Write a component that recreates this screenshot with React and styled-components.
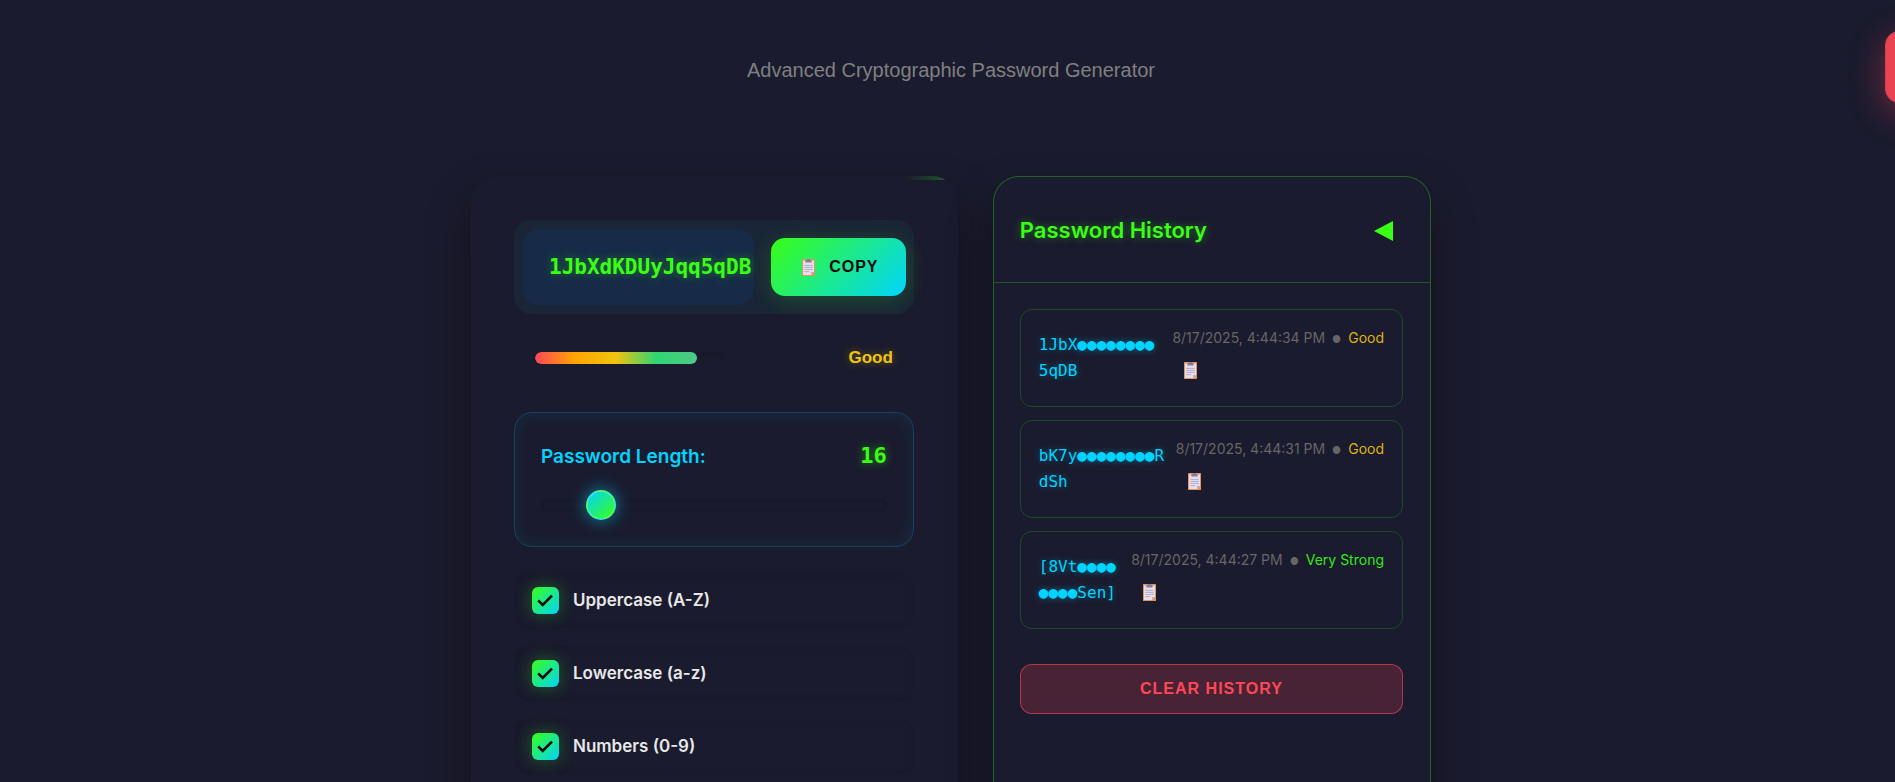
import React, { useState } from "react";
import styled, { createGlobalStyle } from "styled-components";

const GlobalStyle = createGlobalStyle`
  *, *::before, *::after { box-sizing: border-box; }
  html { scrollbar-width: none; background: #1a1b2e; }
  body {
    margin: 0;
    background: #1a1b2e;
    color: #e8e8e8;
    font-family: Inter, "Liberation Sans", sans-serif;
  }
  button, input { font: inherit; }
`;

const Page = styled.div`
  display: flex;
  flex-direction: column;
  align-items: center;
  padding: 55px 24px 48px 31px;
`;

const Subtitle = styled.p`
  margin: 0 0 91px;
  font: 20px/30px "Liberation Sans", sans-serif;
  color: #808080;
  text-align: center;
`;

const Columns = styled.main`
  display: grid;
  grid-template-columns: 10fr 9fr;
  gap: 35px;
  width: 100%;
  max-width: 960px;
`;

const Panel = styled.section`
  position: relative;
  background: #1a1b2e;
  border-radius: 26px;
  box-shadow: 0 22px 44px rgba(16, 6, 8, 0.4);
`;

const GeneratorPanel = styled(Panel)`
  overflow: hidden;
  padding: 44px 44px 44px 43px;

  &::before {
    content: "";
    position: absolute;
    inset: 0 0 auto;
    height: 4px;
    background: linear-gradient(90deg, transparent 89%, rgba(57, 255, 20, 0.24) 97%);
  }
`;

const HistoryPanel = styled(Panel)`
  border: 1px solid rgba(57, 255, 20, 0.3);
`;

const PasswordBox = styled.div`
  display: flex;
  align-items: center;
  justify-content: space-between;
  gap: 17px;
  padding: 9px 8px 9px 9px;
  border-radius: 18px;
  background: linear-gradient(135deg, #1a2538, #1a2536);
`;

const PasswordText = styled.output`
  flex: 1;
  min-width: 0;
  height: 76px;
  padding-left: 26px;
  border-radius: 16px;
  background: #172b48;
  font: bold 21px/76px "DejaVu Sans Mono", monospace;
  color: #39ff14;
  text-shadow: 0 0 9px rgba(57, 255, 20, 0.4);
  white-space: nowrap;
`;

const CopyButton = styled.button`
  display: flex;
  flex: none;
  align-items: center;
  justify-content: center;
  gap: 14px;
  width: 135px;
  height: 58px;
  padding: 0 0 0 4px;
  border: 0;
  border-radius: 14px;
  background: linear-gradient(135deg, #39ff14, #00d4ff);
  box-shadow: 0 4px 22px rgba(57, 255, 20, 0.2);
  font: bold 16px/20px "Liberation Sans", sans-serif;
  letter-spacing: 1px;
  color: #0a0a0f;
`;

const StrengthRow = styled.div`
  display: flex;
  align-items: center;
  justify-content: space-between;
  height: 36px;
  margin: 26px 0 36px;
  padding: 0 21px;
`;

const StrengthTrack = styled.div`
  width: 190px;
  height: 12px;
  border-radius: 6px;
  box-shadow: inset 1px 1px 4px rgba(0, 0, 0, 0.2);
  overflow: hidden;
`;

const StrengthFill = styled.div`
  width: 85%;
  height: 100%;
  border-radius: 6px;
  background: linear-gradient(90deg, #ff4757, #ffa502 25%, #f1c40f 50%, #2ed573 75%, #4fca86);
`;

const StrengthLabel = styled.span`
  font: bold 17px/20px "Liberation Sans", sans-serif;
  color: #f1c40f;
  text-shadow: 0 0 9px rgba(241, 196, 15, 0.4);
`;

const LengthBox = styled.div`
  display: flex;
  flex-direction: column;
  gap: 17px;
  margin-bottom: 26px;
  padding: 26px;
  border: 1px solid rgba(0, 212, 255, 0.22);
  border-radius: 18px;
  box-shadow: inset 0 0 17px rgba(0, 212, 255, 0.1);
`;

const LengthHeader = styled.div`
  display: flex;
  align-items: center;
  justify-content: space-between;
  height: 34px;
`;

const LengthLabel = styled.label`
  font-size: 19px;
  font-weight: 600;
  color: #00d4ff;
`;

const LengthValue = styled.span`
  font: bold 22px/34px "DejaVu Sans Mono", monospace;
  color: #39ff14;
  text-shadow: 0 0 9px rgba(57, 255, 20, 0.5);
`;

const Slider = styled.input`
  appearance: none;
  width: 100%;
  height: 30px;
  margin: 0;
  background: transparent;

  &::-webkit-slider-runnable-track {
    height: 12px;
    border-radius: 6px;
    box-shadow: inset 0 0 4px rgba(0, 0, 0, 0.25);
  }

  &::-webkit-slider-thumb {
    appearance: none;
    width: 30px;
    height: 30px;
    margin-top: -9px;
    border: 2px solid rgba(255, 255, 255, 0.2);
    border-radius: 50%;
    background: linear-gradient(135deg, #00d4ff, #39ff14);
    box-shadow: 0 0 17px rgba(0, 212, 255, 0.6);
  }
`;

const OptionList = styled.div`
  display: grid;
  gap: 18px;
`;

const Option = styled.label`
  display: flex;
  align-items: center;
  gap: 14px;
  height: 55px;
  padding: 0 18px;
  border-radius: 14px;
  box-shadow: inset 0 0 9px rgba(0, 0, 0, 0.12);
  font-size: 17px;
  font-weight: 600;
  line-height: 24px;
`;

const OptionName = styled.span`
  padding-bottom: 2px;
`;

const Check = styled.span`
  position: relative;
  display: grid;
  flex: none;
  width: 27px;
  height: 27px;
  border-radius: 6px;
  box-shadow: 0 0 17px rgba(57, 255, 20, 0.3);

  input, svg { grid-area: 1 / 1; }
  input {
    appearance: none;
    width: 27px;
    height: 27px;
    margin: 0;
    border-radius: 6px;
    background: #141424;
  }
  input:checked { background: linear-gradient(135deg, #39ff14, #00d4ff); }
  svg { display: none; pointer-events: none; z-index: 1; }
  input:checked + svg { display: block; }
`;

const HistoryHeader = styled.header`
  display: flex;
  align-items: center;
  justify-content: space-between;
  height: 106px;
  padding: 0 27px 0 26px;
  border-bottom: 1px solid rgba(57, 255, 20, 0.25);
`;

const HistoryTitle = styled.h2`
  margin: 0;
  font-size: 22px;
  font-weight: 600;
  line-height: 30px;
  color: #39ff14;
  text-shadow: 0 0 9px rgba(57, 255, 20, 0.4);
`;

const CollapseButton = styled.button`
  display: flex;
  padding: 12px 10px 10px;
  border: 0;
  background: none;
`;

const HistoryBody = styled.div`
  padding: 26px 27px 26px 26px;
`;

const HistoryList = styled.ul`
  display: grid;
  gap: 13px;
  margin: 0 0 35px;
  padding: 0;
  list-style: none;
`;

const HistoryItem = styled.li`
  display: flex;
  align-items: center;
  justify-content: space-between;
  height: 98px;
  padding: 0 18px;
  border: 1px solid rgba(57, 255, 20, 0.2);
  border-radius: 12px;
`;

const MaskedPassword = styled.code`
  font: 16px/26px "DejaVu Sans Mono", monospace;
  color: #00d4ff;
  text-shadow: 0 0 7px rgba(0, 212, 255, 0.4);
  white-space: pre;
`;

const ItemMeta = styled.div`
  display: flex;
  flex-direction: column;
  align-items: flex-start;
  gap: 8px;
  padding-bottom: 4px;
  font-size: 14px;
  line-height: 20px;
  color: #666666;
  white-space: nowrap;
`;

const Dot = styled.span`
  margin: 0 3px;
  font-size: 10px;
`;

const Rating = styled.span`
  color: ${(p) => (p.$strong ? "#39ff14" : "#f1c40f")};
  opacity: 0.9;
`;

const ItemCopy = styled.button`
  display: flex;
  align-items: center;
  height: 28px;
  padding: 0 12px;
  border: 0;
  background: none;
`;

const ClearButton = styled.button`
  width: 100%;
  height: 50px;
  border: 1px solid rgba(255, 71, 87, 0.6);
  border-radius: 12px;
  background: rgba(255, 71, 87, 0.2);
  font: bold 16px/20px "Liberation Sans", sans-serif;
  letter-spacing: 1px;
  color: #ff4757;
`;

const Toast = styled.div`
  position: fixed;
  top: 31px;
  left: calc(100% - 10px);
  width: 260px;
  height: 72px;
  border: 1px solid #d03f50;
  border-radius: 14px;
  background: #ea4453;
  box-shadow: 0 9px 35px rgba(255, 71, 87, 0.4);
`;

function ClipboardIcon() {
  return (
    <svg width="13" height="17" viewBox="0 0 13 17" aria-hidden="true">
      <rect width="13" height="17" rx="0.6" fill="#e3935c" />
      <path d="M1 1.6h11V13l-3 3H1z" fill="#e6ddf0" />
      <path d="M12 13 9 16v-3z" fill="#b5adc6" />
      <path d="M3.4 1h1.5V0h3.2v1h1.5v2.6H3.4z" fill="#857f91" />
      <path d="M2.3 6.4h8.4M2.3 8.4h8.4M2.3 10.4h8.4M2.3 12.6h4.7" stroke="#a9a3b9" strokeWidth="0.8" />
    </svg>
  );
}

function CheckIcon() {
  return (
    <svg width="27" height="27" viewBox="0 0 27 27" aria-hidden="true">
      <path d="M6.2 13.4 10.7 18 20 8.7" fill="none" stroke="#0a0a0f" strokeWidth="2.6" />
    </svg>
  );
}

const OPTIONS = ["Uppercase (A-Z)", "Lowercase (a-z)", "Numbers (0-9)"];

const HISTORY = [
  { masked: "1JbX●●●●●●●●\n5qDB", date: "8/17/2025, 4:44:34 PM", rating: "Good" },
  { masked: "bK7y●●●●●●●●R\ndSh", date: "8/17/2025, 4:44:31 PM", rating: "Good" },
  { masked: "[8Vt●●●●\n●●●●Sen]", date: "8/17/2025, 4:44:27 PM", rating: "Very Strong" },
];

export default function App() {
  const [length, setLength] = useState(16);

  return (
    <>
      <GlobalStyle />
      <Page>
        <Subtitle>Advanced Cryptographic Password Generator</Subtitle>
        <Columns>
          <GeneratorPanel>
            <PasswordBox>
              <PasswordText>1JbXdKDUyJqq5qDB</PasswordText>
              <CopyButton type="button">
                <ClipboardIcon />
                COPY
              </CopyButton>
            </PasswordBox>
            <StrengthRow>
              <StrengthTrack>
                <StrengthFill />
              </StrengthTrack>
              <StrengthLabel>Good</StrengthLabel>
            </StrengthRow>
            <LengthBox>
              <LengthHeader>
                <LengthLabel htmlFor="length">Password Length:</LengthLabel>
                <LengthValue>{length}</LengthValue>
              </LengthHeader>
              <Slider
                id="length"
                type="range"
                min="8"
                max="64"
                value={length}
                onChange={(e) => setLength(Number(e.target.value))}
              />
            </LengthBox>
            <OptionList>
              {OPTIONS.map((name) => (
                <Option key={name}>
                  <Check>
                    <input type="checkbox" defaultChecked />
                    <CheckIcon />
                  </Check>
                  <OptionName>{name}</OptionName>
                </Option>
              ))}
            </OptionList>
          </GeneratorPanel>
          <HistoryPanel>
            <HistoryHeader>
              <HistoryTitle>Password History</HistoryTitle>
              <CollapseButton type="button" aria-label="Collapse history">
                <svg width="19" height="20" viewBox="0 0 19 20" aria-hidden="true">
                  <path d="M0 10 19 0v20z" fill="#39ff14" />
                </svg>
              </CollapseButton>
            </HistoryHeader>
            <HistoryBody>
              <HistoryList>
                {HISTORY.map((item) => (
                  <HistoryItem key={item.date}>
                    <MaskedPassword>{item.masked}</MaskedPassword>
                    <ItemMeta>
                      <span>
                        {item.date} <Dot>●</Dot>{" "}
                        <Rating $strong={item.rating === "Very Strong"}>{item.rating}</Rating>
                      </span>
                      <ItemCopy type="button" aria-label="Copy password">
                        <ClipboardIcon />
                      </ItemCopy>
                    </ItemMeta>
                  </HistoryItem>
                ))}
              </HistoryList>
              <ClearButton type="button">CLEAR HISTORY</ClearButton>
            </HistoryBody>
          </HistoryPanel>
        </Columns>
      </Page>
      <Toast role="status" />
    </>
  );
}
